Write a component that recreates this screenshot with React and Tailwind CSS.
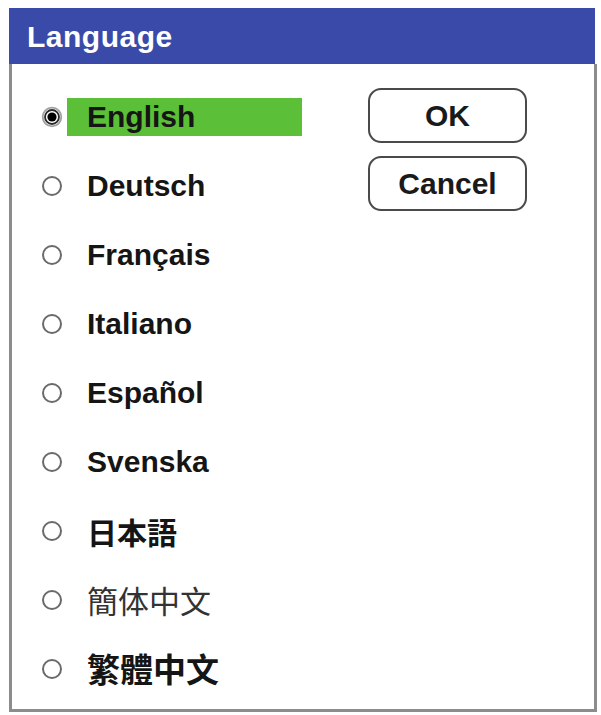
import { useState } from "react";

const LANGS = [
  { label: "English", font: "latin" },
  { label: "Deutsch", font: "latin" },
  { label: "Français", font: "latin" },
  { label: "Italiano", font: "latin" },
  { label: "Español", font: "latin" },
  { label: "Svenska", font: "latin" },
  { label: "日本語", font: "jp" },
  { label: "簡体中文", font: "sc" },
  { label: "繁體中文", font: "tc" },
];

const FONT_CLASS = {
  latin: "font-['Liberation_Sans',Arial,sans-serif] font-bold text-[30px] text-[#151515]",
  jp: "font-['Noto_Sans_CJK_JP',sans-serif] font-bold text-[30px] text-[#151515]",
  sc: "font-['Noto_Sans_CJK_SC',sans-serif] font-normal text-[31px] text-[#333]",
  tc: "font-['Noto_Sans_CJK_TC',sans-serif] font-bold text-[33px] text-[#151515]",
};

function Radio({ checked }) {
  return (
    <svg width="22" height="22" viewBox="0 0 22 22" className="shrink-0">
      {checked ? (
        <>
          <circle cx="11" cy="11" r="9.3" fill="#fff" stroke="#a0a0a0" strokeWidth="1.8" />
          <circle cx="11" cy="11" r="7" fill="#fff" stroke="#2a2a2a" strokeWidth="1.8" />
          <circle cx="11" cy="11" r="4.6" fill="#000" />
        </>
      ) : (
        <circle cx="11" cy="11" r="9" fill="#fff" stroke="#6a6a6a" strokeWidth="2" />
      )}
    </svg>
  );
}

export default function App() {
  const [selected, setSelected] = useState(0);

  return (
    <div className="w-[601px] h-[715px] bg-white pt-[8px] pl-[9px]">
      <div className="w-[588px] h-[704px] flex flex-col">
        {/* title bar */}
        <div className="h-[56px] w-[586px] bg-[#3a4aa8] flex items-center pl-[18px]">
          <span className="font-['Liberation_Sans',Arial,sans-serif] font-bold text-[30px] text-white tracking-[0.5px]">
            Language
          </span>
        </div>

        {/* body */}
        <div className="flex-1 flex border-l-[3px] border-r-[3px] border-b-[3px] border-[#8c8c8c]">
          <div className="w-[356px] pt-[18px] pl-[29px] flex flex-col">
            {LANGS.map((lang, i) => (
              <div
                key={lang.label}
                className="h-[69px] flex items-center cursor-pointer"
                onClick={() => setSelected(i)}
              >
                <Radio checked={selected === i} />
                <div
                  className={
                    "ml-[4px] h-[38px] w-[235px] pl-[20px] flex items-center leading-none " +
                    (selected === i ? "bg-[#5bbf37]" : "")
                  }
                >
                  <span className={FONT_CLASS[lang.font]}>{lang.label}</span>
                </div>
              </div>
            ))}
          </div>

          <div className="pt-[24px] flex flex-col gap-[13px]">
            <button className="w-[159px] h-[55px] rounded-[13px] border-2 border-[#4a4a4a] bg-white font-['Liberation_Sans',Arial,sans-serif] font-bold text-[30px] text-[#1a1a1a]">
              OK
            </button>
            <button className="w-[159px] h-[55px] rounded-[13px] border-2 border-[#4a4a4a] bg-white font-['Liberation_Sans',Arial,sans-serif] font-bold text-[30px] text-[#1a1a1a]">
              Cancel
            </button>
          </div>
        </div>
      </div>
    </div>
  );
}
